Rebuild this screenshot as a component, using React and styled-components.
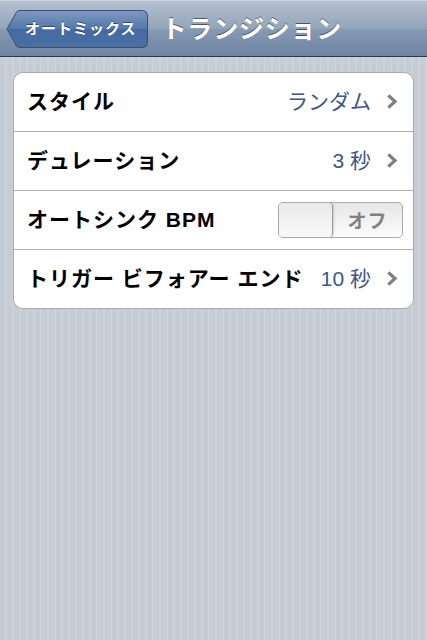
import styled, { createGlobalStyle } from 'styled-components';

const GlobalStyle = createGlobalStyle`
  html, body {
    margin: 0;
    padding: 0;
  }
  body {
    font-family: "Liberation Sans", "Noto Sans CJK JP", sans-serif;
  }
`;

const rows = [
  { id: 'style', label: 'スタイル', value: 'ランダム', type: 'link' },
  { id: 'duration', label: 'デュレーション', value: '3 秒', type: 'link' },
  { id: 'sync', label: 'オートシンク BPM', type: 'switch' },
  { id: 'trigger', label: 'トリガー ビフォアー エンド', value: '10 秒', type: 'link' },
];

const Chevron = () => (
  <ChevronIcon width="11" height="15" viewBox="0 0 11 15">
    <path d="M2.5 2.5 L8 7.5 L2.5 12.5" fill="none" stroke="#7f7f7f" strokeWidth="3.2" strokeLinecap="square" strokeLinejoin="miter" />
  </ChevronIcon>
);

const App = () => {
  return (
    <Page>
      <GlobalStyle />
      <NavBar>
        <BackButton>
          <BackArrow width="20" height="38" viewBox="0 0 20 38">
            <defs>
              <linearGradient id="backGrad" x1="0" y1="0" x2="0" y2="1">
                <stop offset="0" stopColor="#7d98c1" />
                <stop offset="0.5" stopColor="#5478ab" />
                <stop offset="0.5" stopColor="#446aa0" />
                <stop offset="1" stopColor="#4a6fa3" />
              </linearGradient>
            </defs>
            <path d="M20 0.5 L14 0.5 Q12 0.5 10.5 2 L1 19 L10.5 36 Q12 37.5 14 37.5 L20 37.5 Z" fill="url(#backGrad)" stroke="#3b4f6b" strokeWidth="1" />
          </BackArrow>
          <BackBody>オートミックス</BackBody>
        </BackButton>
        <Title>トランジション</Title>
      </NavBar>
      <Content>
        <Group>
          {rows.map(row => (
            <Row key={row.id}>
              <Label>{row.label}</Label>
              {row.type === 'link' ? (
                <ValueBox>
                  <Value>{row.value}</Value>
                  <Chevron />
                </ValueBox>
              ) : (
                <Switch>
                  <Knob />
                  <SwitchText>オフ</SwitchText>
                </Switch>
              )}
            </Row>
          ))}
        </Group>
      </Content>
    </Page>
  );
};

export default App;

const Page = styled.div`
  width: 427px;
  height: 640px;
  display: flex;
  flex-direction: column;
  background-color: #c5ccd4;
  background-image: repeating-linear-gradient(
    90deg,
    #c5ccd4 0px,
    #c5ccd4 5px,
    #cbd2d9 5px,
    #cbd2d9 7px
  );
  overflow: hidden;
`;

const NavBar = styled.div`
  height: 57px;
  display: flex;
  align-items: center;
  gap: 14px;
  padding: 0 0 0 6px;
  background: linear-gradient(#b4c0cf 0%, #93a4ba 50%, #869ab3 50%, #6e84a2 100%);
  border-top: 1px solid #cdd5df;
  border-bottom: 1px solid #2d3642;
  box-sizing: border-box;
  flex-shrink: 0;
`;

const BackButton = styled.div`
  display: flex;
  align-items: center;
  height: 38px;
`;

const BackArrow = styled.svg`
  display: block;
  margin-right: -1px;
`;

const BackBody = styled.div`
  height: 38px;
  box-sizing: border-box;
  display: flex;
  align-items: center;
  padding: 0 10px 2px 0;
  background: linear-gradient(#7d98c1 0%, #5478ab 50%, #446aa0 50%, #4a6fa3 100%);
  border: 1px solid #3b4f6b;
  border-left: none;
  border-radius: 0 6px 6px 0;
  color: #ffffff;
  font-weight: bold;
  font-size: 15px;
  letter-spacing: 1px;
  text-shadow: 0 -1px 0 rgba(0, 0, 0, 0.45);
`;

const Title = styled.h1`
  margin: 0 0 3px 0;
  color: #ffffff;
  font-size: 25px;
  font-weight: bold;
  letter-spacing: 0.8px;
  text-shadow: 0 -1px 0 rgba(0, 0, 0, 0.5);
`;

const Content = styled.div`
  padding: 15px 13px 0 13px;
`;

const Group = styled.div`
  background: #ffffff;
  border: 1px solid #a7abb0;
  border-radius: 10px;
  overflow: hidden;
`;

const Row = styled.div`
  height: 58px;
  display: flex;
  align-items: center;
  justify-content: space-between;
  gap: 10px;
  padding: 0 13px 0 13px;
  border-bottom: 1px solid #acafb3;

  &:last-child {
    border-bottom: none;
  }
`;

const Label = styled.div`
  color: #000000;
  font-weight: bold;
  font-size: 21px;
  letter-spacing: 1px;
  white-space: nowrap;
  padding-bottom: 4px;
`;

const ValueBox = styled.div`
  display: flex;
  align-items: center;
  gap: 16px;
  padding-bottom: 2px;
`;

const Value = styled.div`
  color: #3d5689;
  font-size: 21px;
  white-space: nowrap;
  padding-bottom: 2px;
`;

const ChevronIcon = styled.svg`
  display: block;
  margin-right: 2px;
`;

const Switch = styled.div`
  width: 125px;
  height: 36px;
  box-sizing: border-box;
  display: flex;
  align-items: stretch;
  border: 1px solid #a9a9a9;
  border-radius: 5px;
  background: linear-gradient(#e6e6e6, #fcfcfc);
  overflow: hidden;
  margin-right: -3px;
`;

const Knob = styled.div`
  width: 53px;
  border-right: 1px solid #9a9a9a;
  border-radius: 0 4px 4px 0;
  background: linear-gradient(#e9e9e9, #f9f9f9);
  box-shadow: 1px 0 2px rgba(0, 0, 0, 0.15);
`;

const SwitchText = styled.div`
  flex: 1;
  display: flex;
  align-items: center;
  justify-content: center;
  color: #818181;
  font-weight: bold;
  font-size: 19px;
  letter-spacing: 1px;
  padding-bottom: 2px;
`;
